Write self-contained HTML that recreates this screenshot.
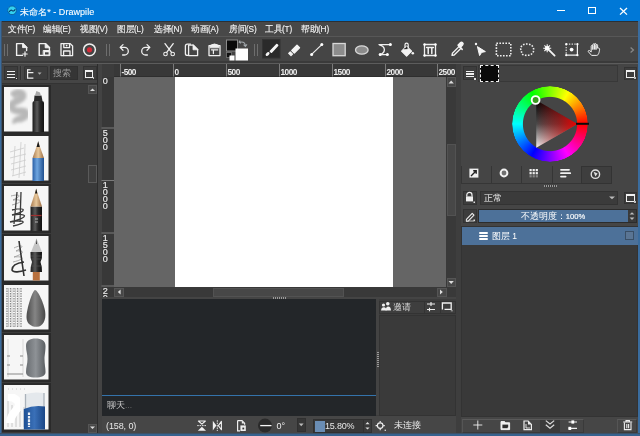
<!DOCTYPE html>
<html><head><meta charset="utf-8">
<style>
*{box-sizing:border-box;margin:0;padding:0}
html,body{width:640px;height:436px;overflow:hidden;-webkit-font-smoothing:antialiased;background:#3c3c3c;font-family:"Liberation Sans",sans-serif;color:#e0e0e0}
.a{position:absolute}
svg{position:absolute;overflow:visible}
#title{left:0;top:0;width:640px;height:21px;background:#0078d7}
#menu{left:0;top:21px;width:640px;height:15px;background:#484848;border-top:1px solid #2b3035}
.mi{position:absolute;top:2px;font-size:8.5px;color:#f0f0f0;white-space:nowrap;letter-spacing:-0.2px;transform:scaleX(0.97);transform-origin:0 0;-webkit-text-stroke:0.15px #f0f0f0}
#tool{left:0;top:36px;width:640px;height:28px;background:#454545;border-top:1px solid #575757;border-bottom:1px solid #5c5c5c;box-shadow:inset 0 -2px 0 #3a3a3a}
.grip{position:absolute;top:44px;width:4px;height:12px;border-left:1px solid #6e6e6e;border-right:1px solid #6e6e6e}
.vr{font-size:9px;line-height:7px;color:#e8e8e8;width:6px;text-align:center;padding-top:1px;-webkit-text-stroke:0.2px #e8e8e8}
.ic{stroke:#f0f0f0;fill:none;stroke-width:1.3;stroke-linecap:round;stroke-linejoin:round}
</style></head><body><div style="position:absolute;left:0;top:0;width:640px;height:436px;will-change:transform">
<!-- title bar -->
<div id="title" class="a">
  <svg style="left:0;top:0" width="30" height="21"><circle cx="12.1" cy="10.3" r="4.3" fill="#33d2f0" stroke="#0a4f8a" stroke-width="0.7"/><path d="M9.4 11.6Q10.8 9.4 12.2 10.6Q13.6 11.8 15 9.6" stroke="#0b3a66" stroke-width="1.1" fill="none" stroke-linecap="round"/></svg>
  <div class="a" style="left:20px;top:5.5px;font-size:9px;color:#fff;white-space:nowrap;letter-spacing:0.05px;-webkit-text-stroke:0.1px #fff">未命名* - Drawpile</div>
  <div class="a" style="left:556.6px;top:10px;width:8.4px;height:1.2px;background:#fff"></div>
  <div class="a" style="left:588px;top:7px;width:7.5px;height:7.2px;border:1.2px solid #fff"></div>
  <svg style="left:619px;top:7px" width="9" height="9"><path d="M1 1L8 7.6M8 1L1 7.6" stroke="#fff" stroke-width="1.3"/></svg>
</div>
<!-- menu bar -->
<div id="menu" class="a">
  <span class="mi" style="left:8px">文件(F)</span>
  <span class="mi" style="left:43px">编辑(E)</span>
  <span class="mi" style="left:80px">视图(V)</span>
  <span class="mi" style="left:117px">图层(L)</span>
  <span class="mi" style="left:154px">选择(N)</span>
  <span class="mi" style="left:191px">动画(A)</span>
  <span class="mi" style="left:229px">房间(S)</span>
  <span class="mi" style="left:265px">工具(T)</span>
  <span class="mi" style="left:301px">帮助(H)</span>
</div>
<!-- toolbar -->
<div id="tool" class="a"></div>
<div class="grip" style="left:4px"></div>
<div class="grip" style="left:106px"></div>
<div class="grip" style="left:254px"></div>
<!-- TOOLBAR ICONS -->
<div id="icons"><svg style="left:0;top:0" width="640" height="64" viewBox="0 0 640 64">
<g class="ic">
<!-- new -->
<path d="M16.6 43.6H22.8L26.6 47.4V50.5M16.6 43.6V55.4H22.5" stroke-width="1.4"/>
<path d="M22.6 43.4V47.6H26.8Z" fill="#f0f0f0" stroke-width="1"/>
<path d="M25 51.8V56.2M22.8 54H27.2" stroke-width="1.2"/>
<!-- open -->
<path d="M39.2 43.6H45.4L49.4 47.6V49.4M39.2 43.6V55.4H42.5" stroke-width="1.4"/>
<path d="M45.2 43.4V47.8H49.6Z" fill="#f0f0f0" stroke-width="1"/>
<path d="M43.6 50.5H49.9V55.6H43.6Z" fill="#f0f0f0" stroke-width="1"/>
<path d="M45 52.3H48.6V54.5H45Z" fill="#3e3e3e" stroke="none"/>
<!-- save -->
<path d="M61 43.6H70.2L72.6 46V55.6H61Z"/>
<path d="M63.8 43.8V47.6H69.6V43.8"/>
<path d="M63.6 55.5V51H70V55.5"/>
<circle cx="66.6" cy="45.6" r="0.9" fill="#f0f0f0" stroke="none"/>
<!-- record -->
<circle cx="89.5" cy="49.8" r="5.9" stroke-width="1.5"/>
<circle cx="89.5" cy="49.8" r="2.6" fill="#d42a38" stroke="none"/>
<!-- undo -->
<path d="M120.5 47.4H124.5A3.8 3.8 0 0 1 124.5 55H122.6"/>
<path d="M123 44.6L120.2 47.4L123 50.2"/>
<!-- redo -->
<path d="M149.5 47.4H145.5A3.8 3.8 0 0 0 145.5 55H147.4"/>
<path d="M147 44.6L149.8 47.4L147 50.2"/>
<!-- cut -->
<path d="M165 43.6L171.5 52.4M173.2 43.6L166.7 52.4"/>
<circle cx="165.5" cy="54" r="1.8" stroke-width="1.1"/>
<circle cx="172.7" cy="54" r="1.8" stroke-width="1.1"/>
<!-- copy -->
<path d="M190.5 44.2H187.4A2 2 0 0 0 185.4 46.2V53.4A2 2 0 0 0 187.4 55.4H188.4" stroke-width="1.3"/>
<path d="M188.6 45.2H193.4L197.6 49.4V55.6H188.6Z" stroke-width="1.3"/>
<path d="M193 45V49.8H197.8Z" fill="#f0f0f0" stroke-width="0.8"/>
<!-- paste -->
<path d="M209 45.6V55.6H220V45.6Z" stroke-width="1.3"/>
<path d="M210.2 47.4V45.4Q214.5 42.6 218.8 45.4V47.4Z" fill="#f0f0f0" stroke-width="1"/>
<path d="M211.4 49.8H217.8M213.4 50V53.6" stroke-width="1.2"/>
</g>
<!-- colors -->
<rect x="226.5" y="40" width="11" height="11" fill="#0a0a0a" stroke="#8a8a8a" stroke-width="1"/>
<rect x="235.5" y="48.5" width="12.5" height="12" fill="#fff"/>
<path d="M240.2 42.2Q244.8 41 245.4 45.6M243.6 44.6L245.4 46.4L247 44.4M240.2 40.6L239.2 42.2L240.8 43.4" stroke="#a0a6aa" fill="none" stroke-width="1.1"/>
<rect x="226.5" y="52.5" width="5" height="5" fill="#111" stroke="#777" stroke-width="0.8"/>
<rect x="229.5" y="55.5" width="5" height="5" fill="#fff"/>
<!-- brush active bg -->
<rect x="262.5" y="39.5" width="17.5" height="18.5" fill="#2a2a2a" stroke="#333" stroke-width="1"/>
<path d="M270.4 51.2L276.8 44.6L277.6 45.4L271.4 52.2Z" fill="#f4f4f4" stroke="#f4f4f4" stroke-width="1.6" stroke-linejoin="round"/>
<ellipse cx="267.6" cy="54" rx="2.3" ry="1.5" transform="rotate(-45 267.6 54)" fill="#f4f4f4"/>
<!-- eraser -->
<path d="M291.8 50.4L297 45.2L299.5 47.7L294.3 52.9Z" fill="#f4f4f4" stroke="#f4f4f4" stroke-width="1.4" stroke-linejoin="round"/>
<path d="M288.7 53.3L290.2 51.8L292.5 54.1L291 55.6Z" fill="#f4f4f4" stroke="#f4f4f4" stroke-width="1.2" stroke-linejoin="round"/>
<!-- line -->
<path d="M311.6 54.4L321.8 44.6" stroke="#eee" stroke-width="1.2"/>
<circle cx="311.6" cy="54.4" r="1.5" fill="#fff"/>
<circle cx="321.8" cy="44.6" r="1.5" fill="#fff"/>
<!-- rect -->
<rect x="333" y="43.5" width="12.2" height="12.2" fill="#8c8c8c" stroke="#d8d8d8" stroke-width="1.3"/>
<!-- ellipse -->
<ellipse cx="361.8" cy="50" rx="6.3" ry="4.2" fill="#8c8c8c" stroke="#d8d8d8" stroke-width="1.3"/>
<!-- bezier -->
<g class="ic" stroke-width="1.3">
<path d="M379 44.6H390M380.4 54.6H387.2"/>
<path d="M379.6 44.8C385.6 46.6 385.8 51.6 381 54.4" />
</g>
<circle cx="390.4" cy="44.6" r="1.5" fill="#fff"/><circle cx="380.2" cy="54.6" r="1.5" fill="#fff"/><circle cx="387.4" cy="54.6" r="1.5" fill="#fff"/>
<!-- fill -->
<path d="M401.6 51.2L406.6 46.2L411.6 51.2L406.6 56.2Z" fill="#f4f4f4" stroke="#f4f4f4" stroke-width="1.2" stroke-linejoin="round"/>
<path d="M403.6 49.2L406.6 46.2L409.4 49Z" fill="#2a2a2a"/>
<path d="M405 48V44.8A1.6 1.6 0 0 1 408.2 44.8V49.4" stroke="#f4f4f4" fill="none" stroke-width="1.2"/>
<circle cx="412.8" cy="53.2" r="1.3" fill="#f4f4f4"/>
<!-- text -->
<g class="ic" stroke-width="1.2">
<path d="M424.5 44.5H435.5V55.5H424.5Z"/>
<path d="M426.6 47.4H433.4M428.2 47.4V53.4M431.8 47.4V53.4" stroke-width="1.5"/>
</g>
<circle cx="424.5" cy="44.5" r="1.2" fill="#fff"/><circle cx="435.5" cy="44.5" r="1.2" fill="#fff"/>
<circle cx="424.5" cy="55.5" r="1.2" fill="#fff"/><circle cx="435.5" cy="55.5" r="1.2" fill="#fff"/>
<!-- picker -->
<path d="M452 55.4L452.4 53.2L459.2 46.4L461 48.2L454.2 55Z" fill="#454545" stroke="#f4f4f4" stroke-width="1.3" stroke-linejoin="round"/>
<path d="M458.2 45.4L462.2 49.4" stroke="#f4f4f4" stroke-width="1.5" stroke-linecap="round"/>
<path d="M460.2 47.4L462.6 45A1.5 1.5 0 0 0 460.4 42.8L458 45.2" fill="#f4f4f4" stroke="#f4f4f4" stroke-width="1.4" stroke-linejoin="round"/>
<!-- pointer -->
<path d="M477.4 46.6L485.4 51.6L481.6 52.4L479.6 55.6Z" fill="#f4f4f4" stroke="#f4f4f4" stroke-width="1" stroke-linejoin="round"/>
<circle cx="476" cy="44" r="1.2" fill="#f4f4f4"/>
<!-- rect select -->
<rect x="496.4" y="43.3" width="14.4" height="12.4" fill="none" stroke="#eee" stroke-width="1.6" stroke-dasharray="1.6 1.4"/>
<!-- lasso -->
<path d="M521 50C519.5 46.5 523.5 43.6 527.5 44C532 44.2 534.5 47.6 533.4 51.5C532.3 55 527.6 56 524 55C521.5 54.3 521.8 52.4 521 50Z" fill="none" stroke="#eee" stroke-width="1.6" stroke-dasharray="1.6 1.4"/>
<!-- wand -->
<path d="M548.6 49.6L554.6 55.6" stroke="#f4f4f4" stroke-width="1.8" stroke-linecap="round"/>
<path d="M547.2 44.2V52.2M543.2 48.2H551.2M544.4 45.4L550 51M550 45.4L544.4 51" stroke="#f4f4f4" stroke-width="1.1"/>
<circle cx="547.2" cy="48.2" r="2.3" fill="#fff"/>
<!-- transform -->
<g>
<path d="M566.2 44.2H577.4M566.2 44.2V55.2" fill="none" stroke="#ddd" stroke-width="1.2" stroke-dasharray="1.4 1.3"/>
<path d="M577.4 44.2V55.2H566.2" fill="none" stroke="#f0f0f0" stroke-width="1.2"/>
<circle cx="566.2" cy="44.2" r="1.1" fill="#fff"/><circle cx="577.4" cy="44.2" r="1.1" fill="#fff"/>
<circle cx="566.2" cy="55.2" r="1.1" fill="#fff"/><circle cx="577.4" cy="55.2" r="1.1" fill="#fff"/>
<circle cx="571.6" cy="49.6" r="1.9" fill="#fff"/>
</g>
<!-- hand -->
<path d="M591.6 55.4L588.4 51.8C587.8 51 588.8 50 589.6 50.6L591.2 52V46.2C591.2 45.2 592.8 45.2 592.8 46.2V49.6V44.6C592.8 43.6 594.4 43.6 594.4 44.6V49.4V44.2C594.4 43.2 596 43.2 596 44.2V49.6V45.2C596 44.2 597.6 44.2 597.6 45.2V48.2C598.4 47.8 599.6 48 599.6 49.2C599.4 52 598.4 55.4 596.8 55.4Z" fill="none" stroke="#f0f0f0" stroke-width="1" stroke-linejoin="round"/>
<!-- ext arrow -->
<path d="M630.6 47.6L633.4 50L630.6 52.4" stroke="#888" stroke-width="1.3" fill="none"/>
</svg></div>

<!-- LEFT DOCK -->
<div id="leftdock"><svg width="0" height="0" style="left:0;top:0"><defs>
<linearGradient id="mk" x1="0" x2="1"><stop offset="0" stop-color="#1a1a1a"/><stop offset="0.4" stop-color="#5a5a5a"/><stop offset="0.65" stop-color="#2a2a2a"/><stop offset="1" stop-color="#111"/></linearGradient>
<linearGradient id="bp" x1="0" x2="1"><stop offset="0" stop-color="#2a5fa6"/><stop offset="0.4" stop-color="#6fa6e0"/><stop offset="1" stop-color="#1f4f8f"/></linearGradient>
<linearGradient id="wood" x1="0" x2="1"><stop offset="0" stop-color="#a87a50"/><stop offset="0.5" stop-color="#e7c79a"/><stop offset="1" stop-color="#9a6a40"/></linearGradient>
<linearGradient id="gr" x1="0" x2="1"><stop offset="0" stop-color="#4c4c4c"/><stop offset="0.45" stop-color="#858585"/><stop offset="1" stop-color="#484848"/></linearGradient>
<linearGradient id="gr2" x1="0" x2="1"><stop offset="0" stop-color="#6a6e72"/><stop offset="0.5" stop-color="#8e9296"/><stop offset="1" stop-color="#5a5e62"/></linearGradient>
<linearGradient id="blu" x1="0" x2="1"><stop offset="0" stop-color="#1d4f94"/><stop offset="0.5" stop-color="#3a70b8"/><stop offset="1" stop-color="#1a4686"/></linearGradient>
<filter id="bl"><feGaussianBlur stdDeviation="1.6"/></filter>
<filter id="bl2"><feGaussianBlur stdDeviation="0.5"/></filter>
</defs></svg><div class="a" style="left:2px;top:64px;width:95px;height:369px;background:#454545"></div>
<!-- header -->
<div class="a" style="left:4px;top:66px;width:14px;height:14px;border:1px solid #333;background:#3d3d3d"></div>
<div class="a" style="left:6.5px;top:70.5px;width:8px;height:1.3px;background:#f0f0f0"></div>
<div class="a" style="left:6.5px;top:73.5px;width:8px;height:1.3px;background:#f0f0f0"></div>
<div class="a" style="left:6.5px;top:76.5px;width:8px;height:1.3px;background:#f0f0f0"></div>
<div class="a" style="left:15.5px;top:77.5px;width:1.5px;height:1.5px;background:#ddd"></div>
<div class="a" style="left:19.5px;top:66px;width:1px;height:14px;background:#303030"></div><div class="a" style="left:21px;top:66px;width:1px;height:14px;background:#4a4a4a"></div>
<div class="a" style="left:23.5px;top:66px;width:24px;height:14px;border:1px solid #333;background:#3d3d3d;border-radius:1px"></div>
<svg style="left:0;top:0" width="100" height="90"><path d="M27.6 69.2V78.2H33.4M27.6 72.6H33.4" stroke="#eee" stroke-width="1.2" fill="none"/><path d="M27.6 69.8H30.6" stroke="#eee" stroke-width="1.2" fill="none"/><path d="M37.6 72.4L41.6 72.4L39.6 74.8Z" fill="#aaa"/></svg>
<div class="a" style="left:50px;top:66px;width:28px;height:14px;background:#353535;border:1px solid #303030"></div>
<div class="a" style="left:53px;top:67.5px;font-size:8.5px;color:#9a9a9a;white-space:nowrap">搜索</div>
<div class="a" style="left:83px;top:66px;width:14px;height:14px;border:1px solid #333;background:#3d3d3d"></div>
<div class="a" style="left:84.6px;top:69.8px;width:8.8px;height:8px;border:1.4px solid #f0f0f0;border-top-width:2.4px"></div>
<div class="a" style="left:92.6px;top:77.2px;width:1.8px;height:1.8px;background:#bbb"></div>
<!-- list frame -->
<div class="a" style="left:1.5px;top:83px;width:96px;height:350px;background:#3a3a3a;border-top:1px solid #333"></div>
<div class="a" style="left:1.5px;top:84.5px;width:49px;height:49px;background:#2a2a2a"></div><svg style="left:3.5px;top:86.5px" width="44.5" height="44.5" viewBox="0 0 44.5 44.5"><rect width="44.5" height="44.5" fill="#f6f6f6"/><g filter="url(#bl)"><path d="M8 9C14 3 22 6 18 11C12 16 6 15 8 21C10 27 22 21 22 27C22 33 10 31 12 36" stroke="#b8b8b8" stroke-width="7" fill="none"/></g>
<path d="M28.5 16Q28.5 14 30.5 14H38Q40 14 40 16V45H28.5Z" fill="url(#mk)"/><path d="M30 14L30.5 8.5H37.5L38.5 14Z" fill="#2a2a2a"/><path d="M31 8.5L32.4 4L36 5.5L36.8 8.5Z" fill="#a8a8a8"/></svg><div class="a" style="left:1.5px;top:134px;width:49px;height:49px;background:#2a2a2a"></div><svg style="left:3.5px;top:136px" width="44.5" height="44.5" viewBox="0 0 44.5 44.5"><rect width="44.5" height="44.5" fill="#f6f6f6"/><g stroke="#cccccc" stroke-width="0.8" fill="none" filter="url(#bl2)"><path d="M9 40L11 10M15 42L17 6M20 40L21 8M6 16L20 12M6 22L22 18M7 28L22 24M7 34L22 30M8 40L22 36"/></g>
<path d="M28.5 22H40V45H28.5Z" fill="url(#bp)"/><path d="M28.5 22L34.2 6L40 22Z" fill="url(#wood)"/><path d="M32.6 11L34.2 5L35.8 11Z" fill="#1a1a1a"/></svg><div class="a" style="left:1.5px;top:183.5px;width:49px;height:49px;background:#2a2a2a"></div><svg style="left:3.5px;top:185.5px" width="44.5" height="44.5" viewBox="0 0 44.5 44.5"><rect width="44.5" height="44.5" fill="#f6f6f6"/><g stroke="#9a9a9a" stroke-width="0.9" fill="none" filter="url(#bl2)"><path d="M7 10C14 8 20 9 9 14C18 13 20 16 8 19"/></g>
<g stroke="#3a3a3a" stroke-width="1.3" fill="none" filter="url(#bl2)"><path d="M10 38L13 6M16 36L17 6M8 24C22 21 24 25 8 29C24 27 26 31 6 36C22 33 24 37 9 40"/></g>
<path d="M26.5 20.5H38V45H26.5Z" fill="url(#mk)"/><path d="M26.5 20.5L32.2 3L38 20.5Z" fill="url(#wood)"/><path d="M31 7.5L32.2 2.5L33.4 7.5Z" fill="#111"/><path d="M27 29.5H37.5" stroke="#a03030" stroke-width="1.2"/><path d="M31 33H34M31 36H34" stroke="#ccc" stroke-width="0.8"/></svg><div class="a" style="left:1.5px;top:233.5px;width:49px;height:49px;background:#2a2a2a"></div><svg style="left:3.5px;top:235.5px" width="44.5" height="44.5" viewBox="0 0 44.5 44.5"><rect width="44.5" height="44.5" fill="#f6f6f6"/><g stroke="#a0a0a0" stroke-width="0.9" fill="none" filter="url(#bl2)"><path d="M10 12C18 8 22 10 12 15C20 14 22 17 10 21C20 20 22 23 9 26"/></g>
<g stroke="#333" stroke-width="1.6" fill="none" filter="url(#bl2)"><path d="M15 5L20 40M20 26C12 27 8 30 8 34C9 37 16 36 22 34"/></g>
<path d="M26.5 16Q26 22 28 26Q26.5 30 26.5 36H38Q38 30 36.5 26Q38.5 22 38 16Z" fill="url(#mk)"/><path d="M27 16L32.5 2.5L38 16Z" fill="#c4c4c4"/><path d="M32 8L32.5 2.5L33 8Z" fill="#333"/><path d="M27 20H37.5M27 23H37.5M27 30H37.5" stroke="#555" stroke-width="0.7"/><path d="M28.8 36H35.8V44.5H28.8Z" fill="#b8703e"/></svg><div class="a" style="left:1.5px;top:283px;width:49px;height:49px;background:#2a2a2a"></div><svg style="left:3.5px;top:285px" width="44.5" height="44.5" viewBox="0 0 44.5 44.5"><rect width="44.5" height="44.5" fill="#f6f6f6"/><g stroke="#8a8a8a" stroke-width="1.3" fill="none" filter="url(#bl2)" stroke-dasharray="1.5 1"><path d="M3 3V42M6.5 3V42M10 3V42M13.5 3V42M17 3V42"/></g><g stroke="#bbb" stroke-width="0.8" fill="none"><path d="M4.5 3V42M8 3V42M11.5 3V42M15 3V42"/></g>
<path d="M31 5C33.5 4.8 40 18 41.2 27C42.2 35 39 41.5 33 41.8C27 42 22.5 38.5 22.5 32C22.5 24 28.5 5.2 31 5Z" fill="url(#gr)"/></svg><div class="a" style="left:1.5px;top:332.5px;width:49px;height:49px;background:#2a2a2a"></div><svg style="left:3.5px;top:334.5px" width="44.5" height="44.5" viewBox="0 0 44.5 44.5"><rect width="44.5" height="44.5" fill="#f6f6f6"/><g stroke="#cfcfcf" stroke-width="0.8" fill="none" filter="url(#bl2)"><path d="M4 4V42M19 4V42"/><path d="M3 21H6M16 21H19M3 30H6M16 30H19M3 39H19" stroke="#8a8a8a" stroke-width="1.2"/></g>
<path d="M22 11C22 5.5 26 3.5 31.5 3.5C37.5 3.5 41.5 5.5 41.5 11C41.5 17 40.5 20 40.5 24C40.5 29 41.5 33 41.5 37C41.5 41 37.5 42.5 31.5 42.5C25.5 42.5 22 41 22 37C22 32 23.5 29 23.5 24C23.5 19 22 16 22 11Z" fill="url(#gr2)"/></svg><div class="a" style="left:1.5px;top:382.5px;width:49px;height:49px;background:#2a2a2a"></div><svg style="left:3.5px;top:384.5px" width="44.5" height="44.5" viewBox="0 0 44.5 44.5"><rect width="44.5" height="44.5" fill="#f6f6f6"/><g stroke="#bdbdbd" stroke-width="0.8" fill="none" filter="url(#bl2)"><path d="M4 16V42M8 20V42M12 24V42M16 26V42M20 22V42"/><path d="M4 4H22" stroke-dasharray="1 3"/></g>
<path d="M4 12C12 12 18 18 13 24C9 29 6 32 6 38" stroke="#fff" stroke-width="8" fill="none" filter="url(#bl2)"/>
<path d="M21.5 9Q30 6.5 40 8V24H21.5Z" fill="#e4e8ec"/><path d="M21.5 9V24M40 8V24" stroke="#aab2ba" stroke-width="1.3"/><path d="M19.8 24Q30 19.5 41 21.5V44.5H19.8Z" fill="url(#blu)"/>
<path d="M25 27.5V42" stroke="#e8eef6" stroke-width="2.2" stroke-dasharray="2.6 0.8"/></svg>
<!-- scrollbar -->
<div class="a" style="left:87.5px;top:84px;width:9.5px;height:349px;background:#3a3a3a"></div>
<div class="a" style="left:88px;top:85px;width:9px;height:9px;background:#474747;border:1px solid #555"></div>
<div class="a" style="left:88px;top:424px;width:9px;height:9px;background:#474747;border:1px solid #555"></div>
<div class="a" style="left:88px;top:164.5px;width:9px;height:18px;background:#3f3f3f;border:1px solid #5a5a5a"></div>
<svg style="left:0;top:0" width="100" height="436"><path d="M90 91L92.5 88.5L95 91Z" fill="#ddd"/><path d="M90 426.5L92.5 429L95 426.5Z" fill="#ddd"/></svg>
<div class="a" style="left:97px;top:64px;width:1px;height:369px;background:#2c2c2c"></div>
</div>

<!-- CENTRAL -->
<div id="central">
<!-- splitter column -->
<div class="a" style="left:98px;top:64px;width:4px;height:369px;background:#434343"></div>
<!-- rulers -->
<div class="a" style="left:114px;top:64px;width:342px;height:12.5px;background:#383838;border-bottom:1.5px solid #2e2e2e"></div>
<div class="a" style="left:101.5px;top:76.5px;width:12.5px;height:221px;background:#383838"></div>
<svg style="left:0;top:0" width="640" height="436">
<g stroke="#7a7a7a" stroke-width="1">
<path d="M120.5 64V76.5M173.5 64V76.5M226.5 64V76.5M279.5 64V76.5M332.5 64V76.5M385.5 64V76.5M437.5 64V76.5"/>
<path d="M101.5 128H114M101.5 180.5H114M101.5 233H114M101.5 286H114"/>
</g>

</svg>
<div class="a" style="left:121.5px;top:66.8px;font-size:8.3px;font-weight:bold;color:#ececec;white-space:nowrap;letter-spacing:-0.55px">-500</div>
<div class="a" style="left:174.5px;top:66.8px;font-size:8.3px;font-weight:bold;color:#ececec">0</div>
<div class="a" style="left:227.5px;top:66.8px;font-size:8.3px;font-weight:bold;color:#ececec;letter-spacing:-0.55px">500</div>
<div class="a" style="left:280.5px;top:66.8px;font-size:8.3px;font-weight:bold;color:#ececec;letter-spacing:-0.55px">1000</div>
<div class="a" style="left:333.5px;top:66.8px;font-size:8.3px;font-weight:bold;color:#ececec;letter-spacing:-0.55px">1500</div>
<div class="a" style="left:386.5px;top:66.8px;font-size:8.3px;font-weight:bold;color:#ececec;letter-spacing:-0.55px">2000</div>
<div class="a" style="left:438.5px;top:66.8px;font-size:8.3px;font-weight:bold;color:#ececec;letter-spacing:-0.55px;width:18px;overflow:hidden;white-space:nowrap">2500</div>
<div class="a vr" style="left:102.3px;top:76.5px">0</div>
<div class="a vr" style="left:102.3px;top:128.5px">5<br>0<br>0</div>
<div class="a vr" style="left:102.3px;top:181px">1<br>0<br>0<br>0</div>
<div class="a vr" style="left:102.3px;top:233.5px">1<br>5<br>0<br>0</div>
<div class="a vr" style="left:102.3px;top:286.5px;height:11px;overflow:hidden">2<br>0</div>
<!-- canvas -->
<div class="a" style="left:114px;top:76.5px;width:332px;height:210.5px;background:#656565"></div>
<div class="a" style="left:175px;top:76.5px;width:218px;height:210.5px;background:#fff"></div>
<!-- v scrollbar -->
<div class="a" style="left:446px;top:76.5px;width:10px;height:221px;background:#393939"></div>
<div class="a" style="left:446.5px;top:77px;width:9.5px;height:9.5px;background:#474747;border:1px solid #555"></div>
<div class="a" style="left:446.5px;top:277.5px;width:9.5px;height:9.5px;background:#474747;border:1px solid #555"></div>
<div class="a" style="left:446.5px;top:144px;width:9.5px;height:72px;background:#474747;border:1px solid #525252"></div>
<!-- h scrollbar -->
<div class="a" style="left:114px;top:287px;width:332px;height:10px;background:#393939"></div>
<div class="a" style="left:114px;top:287.5px;width:10px;height:9.5px;background:#474747;border:1px solid #555"></div>
<div class="a" style="left:436.5px;top:287.5px;width:10px;height:9.5px;background:#474747;border:1px solid #555"></div>
<div class="a" style="left:213px;top:287.5px;width:131px;height:9.5px;background:#474747;border:1px solid #525252"></div>
<svg style="left:0;top:0" width="640" height="436">
<path d="M448.6 83.6L451.2 80.6L453.8 83.6Z" fill="#ddd"/>
<path d="M448.6 281L451.2 284L453.8 281Z" fill="#ddd"/>
<path d="M120.6 289.4L117.8 292L120.6 294.6Z" fill="#ddd"/>
<path d="M440 289.4L442.8 292L440 294.6Z" fill="#ddd"/>
</svg>
<!-- splitter -->
<div class="a" style="left:102px;top:297px;width:354px;height:2px;background:#444"></div>
<div class="a" style="left:273px;top:297px;width:13px;height:2px;background:repeating-linear-gradient(to right,#9a9a9a 0 1px,#444 1px 2px)"></div>
<!-- chat -->
<div class="a" style="left:102px;top:299px;width:274px;height:96px;background:#232629"></div>
<div class="a" style="left:102px;top:394.5px;width:274px;height:2px;background:#3473ab"></div>
<div class="a" style="left:102px;top:396px;width:274px;height:20px;background:#232629"></div>
<div class="a" style="left:107px;top:399.5px;font-size:8.5px;color:#c8c8c8;white-space:nowrap">聊天<span style="color:#6a6a6a">...</span></div>
<!-- user panel -->
<div class="a" style="left:376px;top:299px;width:2.5px;height:116px;background:#434343"></div>
<div class="a" style="left:378.5px;top:299px;width:77.5px;height:116px;background:#3c3c3c"></div>
<div class="a" style="left:378.5px;top:300.5px;width:77px;height:13px;border:1px solid #333;background:#3e3e3e"></div>
<div class="a" style="left:424px;top:301px;width:1px;height:12px;background:#333"></div>
<div class="a" style="left:439.5px;top:301px;width:1px;height:12px;background:#333"></div>
<svg style="left:0;top:0" width="640" height="436">
<circle cx="383.5" cy="305" r="1.6" fill="#f0f0f0"/><circle cx="387.8" cy="303.8" r="1.8" fill="#f0f0f0"/>
<path d="M381 310.5Q381.5 307 384 307.2Q386.4 307.4 386.6 310.5Z" fill="#f0f0f0"/>
<path d="M385.5 310.5Q386 306.5 388.2 306.5Q390.8 306.6 391 310.5Z" fill="#f0f0f0"/>
<path d="M427 304H435M431 302V306" stroke="#eee" stroke-width="1.1"/><path d="M427 309.5H435M429.5 307.8V311.2" stroke="#eee" stroke-width="1.1"/>
<path d="M442.4 309.6V303H451.2V309.4H444.5" stroke="#f0f0f0" stroke-width="1.3" fill="none"/>
<path d="M450.8 310.8H452.8" stroke="#bbb" stroke-width="1"/>
</svg>
<div class="a" style="left:392.5px;top:301.5px;font-size:8.5px;color:#d8d8d8;white-space:nowrap">邀请</div>
<div class="a" style="left:378.5px;top:315px;width:77px;height:101px;background:#3a3a3a;border:1px solid #333"></div>
<div class="a" style="left:376.5px;top:352px;width:2px;height:15px;background:repeating-linear-gradient(to bottom,#9a9a9a 0 1px,#444 1px 2px)"></div>
</div>

<!-- RIGHT DOCK -->
<div id="rightdock">
<div class="a" style="left:456px;top:64px;width:5px;height:369px;background:#3e3e3e"></div>
<div class="a" style="left:461px;top:64px;width:177px;height:369px;background:#454545"></div>
<!-- header -->
<div class="a" style="left:462.5px;top:66px;width:14px;height:14px;border:1px solid #333;background:#3d3d3d"></div>
<div class="a" style="left:465.5px;top:70.8px;width:8.5px;height:1.3px;background:#f0f0f0"></div>
<div class="a" style="left:465.5px;top:73.4px;width:8.5px;height:1.3px;background:#f0f0f0"></div>
<div class="a" style="left:465.5px;top:76px;width:8.5px;height:1.3px;background:#f0f0f0"></div>
<div class="a" style="left:474px;top:78px;width:1.5px;height:1.5px;background:#ddd"></div>
<div class="a" style="left:477.5px;top:65px;width:140.5px;height:17px;border:1px solid #383838;background:#424242"></div>
<div class="a" style="left:480px;top:65px;width:19px;height:16.5px;background:#0a0a0a;border:1.5px dashed #f0f0f0"></div>
<div class="a" style="left:624px;top:67px;width:12.5px;height:13px;border:1px solid #333;background:#3d3d3d"></div>
<div class="a" style="left:625.8px;top:69.6px;width:8.8px;height:8px;border:1.4px solid #f0f0f0;border-top-width:2.4px"></div><div class="a" style="left:633.8px;top:77px;width:1.8px;height:1.8px;background:#bbb"></div>
<!-- color wheel -->
<div class="a" style="left:512px;top:85.8px;width:76px;height:76px;border-radius:50%;background:conic-gradient(from 90deg, #f00, #f0f 60deg, #00f 120deg, #0ff 180deg, #0f0 240deg, #ff0 300deg, #f00 360deg);-webkit-mask:radial-gradient(circle, transparent 26.6px, #000 27.6px, #000 37.4px, transparent 38.2px)"></div>
<svg style="left:0;top:0" width="640" height="436">
<defs>
<linearGradient id="tbw" x1="0" y1="100.18430139592793" x2="0" y2="147.81569860407205" gradientUnits="userSpaceOnUse"><stop offset="0" stop-color="#000"/><stop offset="0.5" stop-color="#4a4a4a"/><stop offset="1" stop-color="#f4f4f4"/></linearGradient>
<linearGradient id="tred" x1="536.25" y1="0" x2="577.5" y2="0" gradientUnits="userSpaceOnUse"><stop offset="0" stop-color="#d00" stop-opacity="0"/><stop offset="0.55" stop-color="#c00" stop-opacity="0.5"/><stop offset="1" stop-color="#e00" stop-opacity="1"/></linearGradient>
</defs>
<path d="M577.5 124L536.25 100.18430139592793L536.25 147.81569860407205Z" fill="url(#tbw)"/>
<path d="M577.5 124L536.25 100.18430139592793L536.25 147.81569860407205Z" fill="url(#tred)"/>
<path d="M576 123.8H589" stroke="#0a0a0a" stroke-width="2"/>
<circle cx="535.6" cy="100" r="3.9" fill="#3a9a20" stroke="#fff" stroke-width="1.9"/>
</svg>
<!-- tabs -->
<div class="a" style="left:461px;top:166px;width:1px;height:17px;background:#353535"></div>
<div class="a" style="left:491px;top:166px;width:1px;height:17px;background:#353535"></div>
<div class="a" style="left:520.5px;top:166px;width:1px;height:17px;background:#353535"></div>
<div class="a" style="left:551.5px;top:166px;width:1px;height:17px;background:#353535"></div>
<div class="a" style="left:461px;top:183px;width:121px;height:1px;background:#363636"></div>
<div class="a" style="left:581px;top:166px;width:30.5px;height:18px;border:1px solid #333;background:#3e3e3e"></div>
<svg style="left:0;top:0" width="640" height="436">
<!-- tab1 icon -->
<path d="M469.4 168.6H478.4V177.6H469.4Z" fill="#f0f0f0"/>
<path d="M471 176L476 171M473.2 170.8H476.2V173.8" stroke="#222" stroke-width="1.4" fill="none"/>
<!-- tab2 circle -->
<circle cx="504" cy="173" r="3.4" fill="#707070" stroke="#f0f0f0" stroke-width="2"/>
<!-- tab3 grid -->
<g fill="#eee"><rect x="529.5" y="169" width="2.2" height="2.2"/><rect x="532.6" y="169" width="2.2" height="2.2"/><rect x="535.7" y="169" width="2.2" height="2.2"/>
<rect x="529.5" y="172.1" width="2.2" height="2.2"/><rect x="532.6" y="172.1" width="2.2" height="2.2"/><rect x="535.7" y="172.1" width="2.2" height="2.2"/></g>
<g fill="#888"><rect x="529.5" y="175.2" width="2.2" height="2.2"/><rect x="532.6" y="175.2" width="2.2" height="2.2"/><rect x="535.7" y="175.2" width="2.2" height="2.2"/></g>
<!-- tab4 sliders -->
<path d="M561 169.8H569M561 173.2H570.2M561 176.6H565.6" stroke="#f0f0f0" stroke-width="1.8" stroke-linecap="round"/>
<!-- tab5 -->
<circle cx="595.4" cy="174.2" r="4.2" fill="none" stroke="#e0e0e0" stroke-width="1.4"/>
<path d="M593.6 171.8L597.6 173.4L595.4 176.4Z" fill="#e0e0e0"/>
</svg>
<div class="a" style="left:544px;top:185px;width:13px;height:2px;background:repeating-linear-gradient(to right,#9a9a9a 0 1px,#3c3c3c 1px 2px)"></div>
<!-- layer controls -->
<div class="a" style="left:462.5px;top:191px;width:14px;height:13.5px;border:1px solid #333;background:#3d3d3d"></div>
<svg style="left:0;top:0" width="640" height="436">
<path d="M466.8 196.6V195A2.6 2.6 0 0 1 472 195V196.6" fill="none" stroke="#f0f0f0" stroke-width="1.2"/>
<rect x="466" y="196.4" width="7" height="5" fill="#f0f0f0"/>
<rect x="473.5" y="201.5" width="1.5" height="1.5" fill="#ddd"/>
<path d="M466.4 219.4L472.2 213.4L474 215.2L468.2 221.2H466.4Z" fill="none" stroke="#eee" stroke-width="1.1" stroke-linejoin="round"/>
<path d="M466 221H474.5" stroke="#ccc" stroke-width="0.9"/>
</svg>
<div class="a" style="left:480px;top:191px;width:137.5px;height:13.5px;border:1px solid #333;background:#3b3b3b"></div>
<div class="a" style="left:484px;top:192.5px;font-size:8.5px;color:#eee;white-space:nowrap">正常</div>
<svg style="left:0;top:0" width="640" height="436"><path d="M609 196.4H615L612 199.2Z" fill="#bbb"/></svg>
<div class="a" style="left:624px;top:192px;width:12.5px;height:12px;border:1px solid #333;background:#3d3d3d"></div>
<div class="a" style="left:625.8px;top:194px;width:8.8px;height:8px;border:1.4px solid #f0f0f0;border-top-width:2.4px"></div><div class="a" style="left:633.8px;top:201.4px;width:1.8px;height:1.8px;background:#bbb"></div>
<div class="a" style="left:462.5px;top:208.5px;width:14px;height:14px;border:1px solid #333;background:#3d3d3d"></div>
<svg style="left:0;top:0" width="640" height="436"><path d="M466.4 219.4L472.2 213.4L474 215.2L468.2 221.2H466.4Z" fill="none" stroke="#eee" stroke-width="1.1" stroke-linejoin="round"/><path d="M466 221H474.5" stroke="#ccc" stroke-width="0.9"/><rect x="473.5" y="219.5" width="1.5" height="1.5" fill="#ddd"/></svg>
<div class="a" style="left:477.5px;top:209px;width:159px;height:13.5px;border:1px solid #2c2c2c;background:#3a3a3a"></div>
<div class="a" style="left:478.5px;top:210px;width:149px;height:11.5px;background:#4d7199"></div>
<div class="a" style="left:478.5px;top:211px;width:149px;height:11.5px;text-align:center;font-size:8.5px;line-height:11.5px;color:#fff;white-space:nowrap">不透明度：<span style="font-size:7.6px;-webkit-text-stroke:0.15px #fff">100%</span></div>
<svg style="left:0;top:0" width="640" height="436"><path d="M629.6 214.6L632 212.2L634.4 214.6Z" fill="#bbb"/><path d="M629.6 217.6L632 220L634.4 217.6Z" fill="#bbb"/></svg>
<!-- layer list -->
<div class="a" style="left:461px;top:225.5px;width:176.5px;height:191px;background:#393939;border:1px solid #333"></div>
<div class="a" style="left:461.5px;top:227px;width:176px;height:18px;background:#4d7199"></div>
<div class="a" style="left:478.5px;top:232px;width:9px;height:1.7px;background:#fff;border-radius:1px"></div>
<div class="a" style="left:478.5px;top:235px;width:9px;height:1.7px;background:#fff;border-radius:1px"></div>
<div class="a" style="left:478.5px;top:238px;width:9px;height:1.7px;background:#fff;border-radius:1px"></div>
<div class="a" style="left:492px;top:230.5px;font-size:8.5px;color:#fff;white-space:nowrap">图层 1</div>
<div class="a" style="left:625px;top:231px;width:8.5px;height:8.5px;border:1px solid #3a4f66;background:#5a7594"></div>
<!-- bottom buttons -->
<div class="a" style="left:461.5px;top:417px;width:176px;height:16px;background:#464646"></div>
<div class="a" style="left:462px;top:418.5px;width:121.5px;height:14px;border:1px solid #3a3a3a;border-top-color:#5a5a5a;border-left-color:#555"></div>
<div class="a" style="left:540px;top:419.5px;width:20px;height:12.5px;background:#3a3a3a"></div>
<div class="a" style="left:616.5px;top:418.5px;width:20.5px;height:14px;border:1px solid #3a3a3a;border-top-color:#5a5a5a;border-left-color:#555"></div>
<svg style="left:0;top:0" width="640" height="436">
<path d="M477.8 420.5V429.5M473.3 425H482.3" stroke="#f0f0f0" stroke-width="0.9"/>
<path d="M501 421.6H504.6L505.6 422.8H509.6V429.6H501Z" fill="#f0f0f0" stroke="#f0f0f0" stroke-width="1"/>
<path d="M502.4 424.6H508.2V428.2H502.4Z" fill="#2e2e2e"/>
<rect x="507.6" y="427.4" width="2" height="2" fill="#f0f0f0"/>
<path d="M524 421V429.6H531.4V424.4L528.2 421Z" fill="none" stroke="#eee" stroke-width="1.2"/>
<path d="M528 421V424.6H531.6Z" fill="#eee"/>
<path d="M526 424V428H530" fill="none" stroke="#eee" stroke-width="0.9"/>
<path d="M545.8 420.6L550 424L554.2 420.6M545.8 424.8L550 428.2L554.2 424.8" fill="none" stroke="#ddd" stroke-width="1.2"/>
<path d="M568.6 422H577M568.6 428.4H577" stroke="#eee" stroke-width="1.1"/>
<rect x="571.4" y="420.4" width="2.8" height="3.2" fill="#fff"/>
<rect x="568.4" y="426.8" width="2.8" height="3.2" fill="#fff"/>
<path d="M623.2 422H632.2M626 422V420.6H629.4V422" fill="none" stroke="#eee" stroke-width="1.1"/>
<path d="M624.4 422.5V429.6H631V422.5M626.8 424V428.2M628.6 424V428.2" fill="none" stroke="#eee" stroke-width="1.1"/>
</svg>
</div>

<!-- STATUS -->
<div id="status">
<div class="a" style="left:102px;top:416px;width:354px;height:17.5px;background:#464646"></div>
<div class="a" style="left:106px;top:420.5px;font-size:9px;color:#e8e8e8;white-space:nowrap;letter-spacing:-0.1px">(158, 0)</div>
<svg style="left:0;top:0" width="640" height="436">
<path d="M198.4 421H205.4L201.9 424.2Z" fill="none" stroke="#f0f0f0" stroke-width="1.1" stroke-linejoin="round"/>
<path d="M197.8 430.8H206L201.9 426.8Z" fill="#f0f0f0"/>
<path d="M197.2 425.6H206.6" stroke="#f0f0f0" stroke-width="0.9" stroke-dasharray="1.6 0.8"/>
<path d="M212.8 420.8V430.4L216.4 425.6Z" fill="#f0f0f0"/>
<path d="M221.4 421.4V429.8L218.4 425.6Z" fill="none" stroke="#f0f0f0" stroke-width="1.1" stroke-linejoin="round"/>
<path d="M217.3 420.2V431" stroke="#f0f0f0" stroke-width="0.9" stroke-dasharray="1.6 0.8"/>
<path d="M237.6 420.6H242L244.6 423.2V424.8M237.6 420.6V430.8H240" fill="none" stroke="#eee" stroke-width="1.2"/>
<path d="M241.8 420.6V423.4H244.6Z" fill="#eee"/>
<rect x="240.4" y="425.4" width="5.4" height="5.6" fill="#eee"/><rect x="242.4" y="427.6" width="1.8" height="1.8" fill="#333"/>
<circle cx="265" cy="425.6" r="7" fill="#2a2a2a"/>
<path d="M260.2 425.6H271.5" stroke="#f4f4f4" stroke-width="1.3"/>

</svg>
<div class="a" style="left:276.5px;top:420.5px;font-size:9px;color:#eee;white-space:nowrap">0°</div>
<div class="a" style="left:296.5px;top:418px;width:9px;height:14px;background:#363636;border:1px solid #303030"></div>
<svg style="left:0;top:0" width="640" height="436"><path d="M298.8 423.6H303.6L301.2 426.2Z" fill="#bbb"/></svg>
<div class="a" style="left:313px;top:419px;width:59px;height:13.5px;background:#383838;border:1px solid #303030"></div>
<div class="a" style="left:314.5px;top:420.5px;width:10.5px;height:11px;background:#6a8db4"></div>
<div class="a" style="left:325px;top:420.5px;font-size:9px;color:#e8e8e8;white-space:nowrap;letter-spacing:-0.2px">15.80%</div>
<div class="a" style="left:363px;top:419px;width:9px;height:13.5px;background:#3a3a3a;border:1px solid #303030"></div>
<svg style="left:0;top:0" width="640" height="436">
<path d="M365.4 424.2L367.5 422L369.6 424.2Z" fill="#ddd"/><path d="M365.4 427.4L367.5 429.6L369.6 427.4Z" fill="#ddd"/>
<circle cx="380.2" cy="425.6" r="2.8" fill="none" stroke="#eee" stroke-width="1.2"/>
<path d="M380.2 421V422.6M380.2 428.6V430.2M375.6 425.6H377.2M383.2 425.6H384.8" stroke="#eee" stroke-width="1.2"/>
<rect x="384.6" y="429.6" width="1.4" height="1.4" fill="#ccc"/>
</svg>
<div class="a" style="left:393.5px;top:420px;font-size:8.7px;color:#e8e8e8;white-space:nowrap">未连接</div>
</div>

<!-- borders -->
<div class="a" style="left:0;top:21px;width:1px;height:415px;background:#3a6c9e"></div>
<div class="a" style="left:1px;top:21px;width:1px;height:415px;background:#3a5470"></div>
<div class="a" style="left:638px;top:21px;width:2px;height:415px;background:#3a6c9e"></div>
<div class="a" style="left:0;top:433px;width:640px;height:1px;background:#3d5166"></div><div class="a" style="left:0;top:434px;width:640px;height:2px;background:#36628e"></div>
</div></body></html>
